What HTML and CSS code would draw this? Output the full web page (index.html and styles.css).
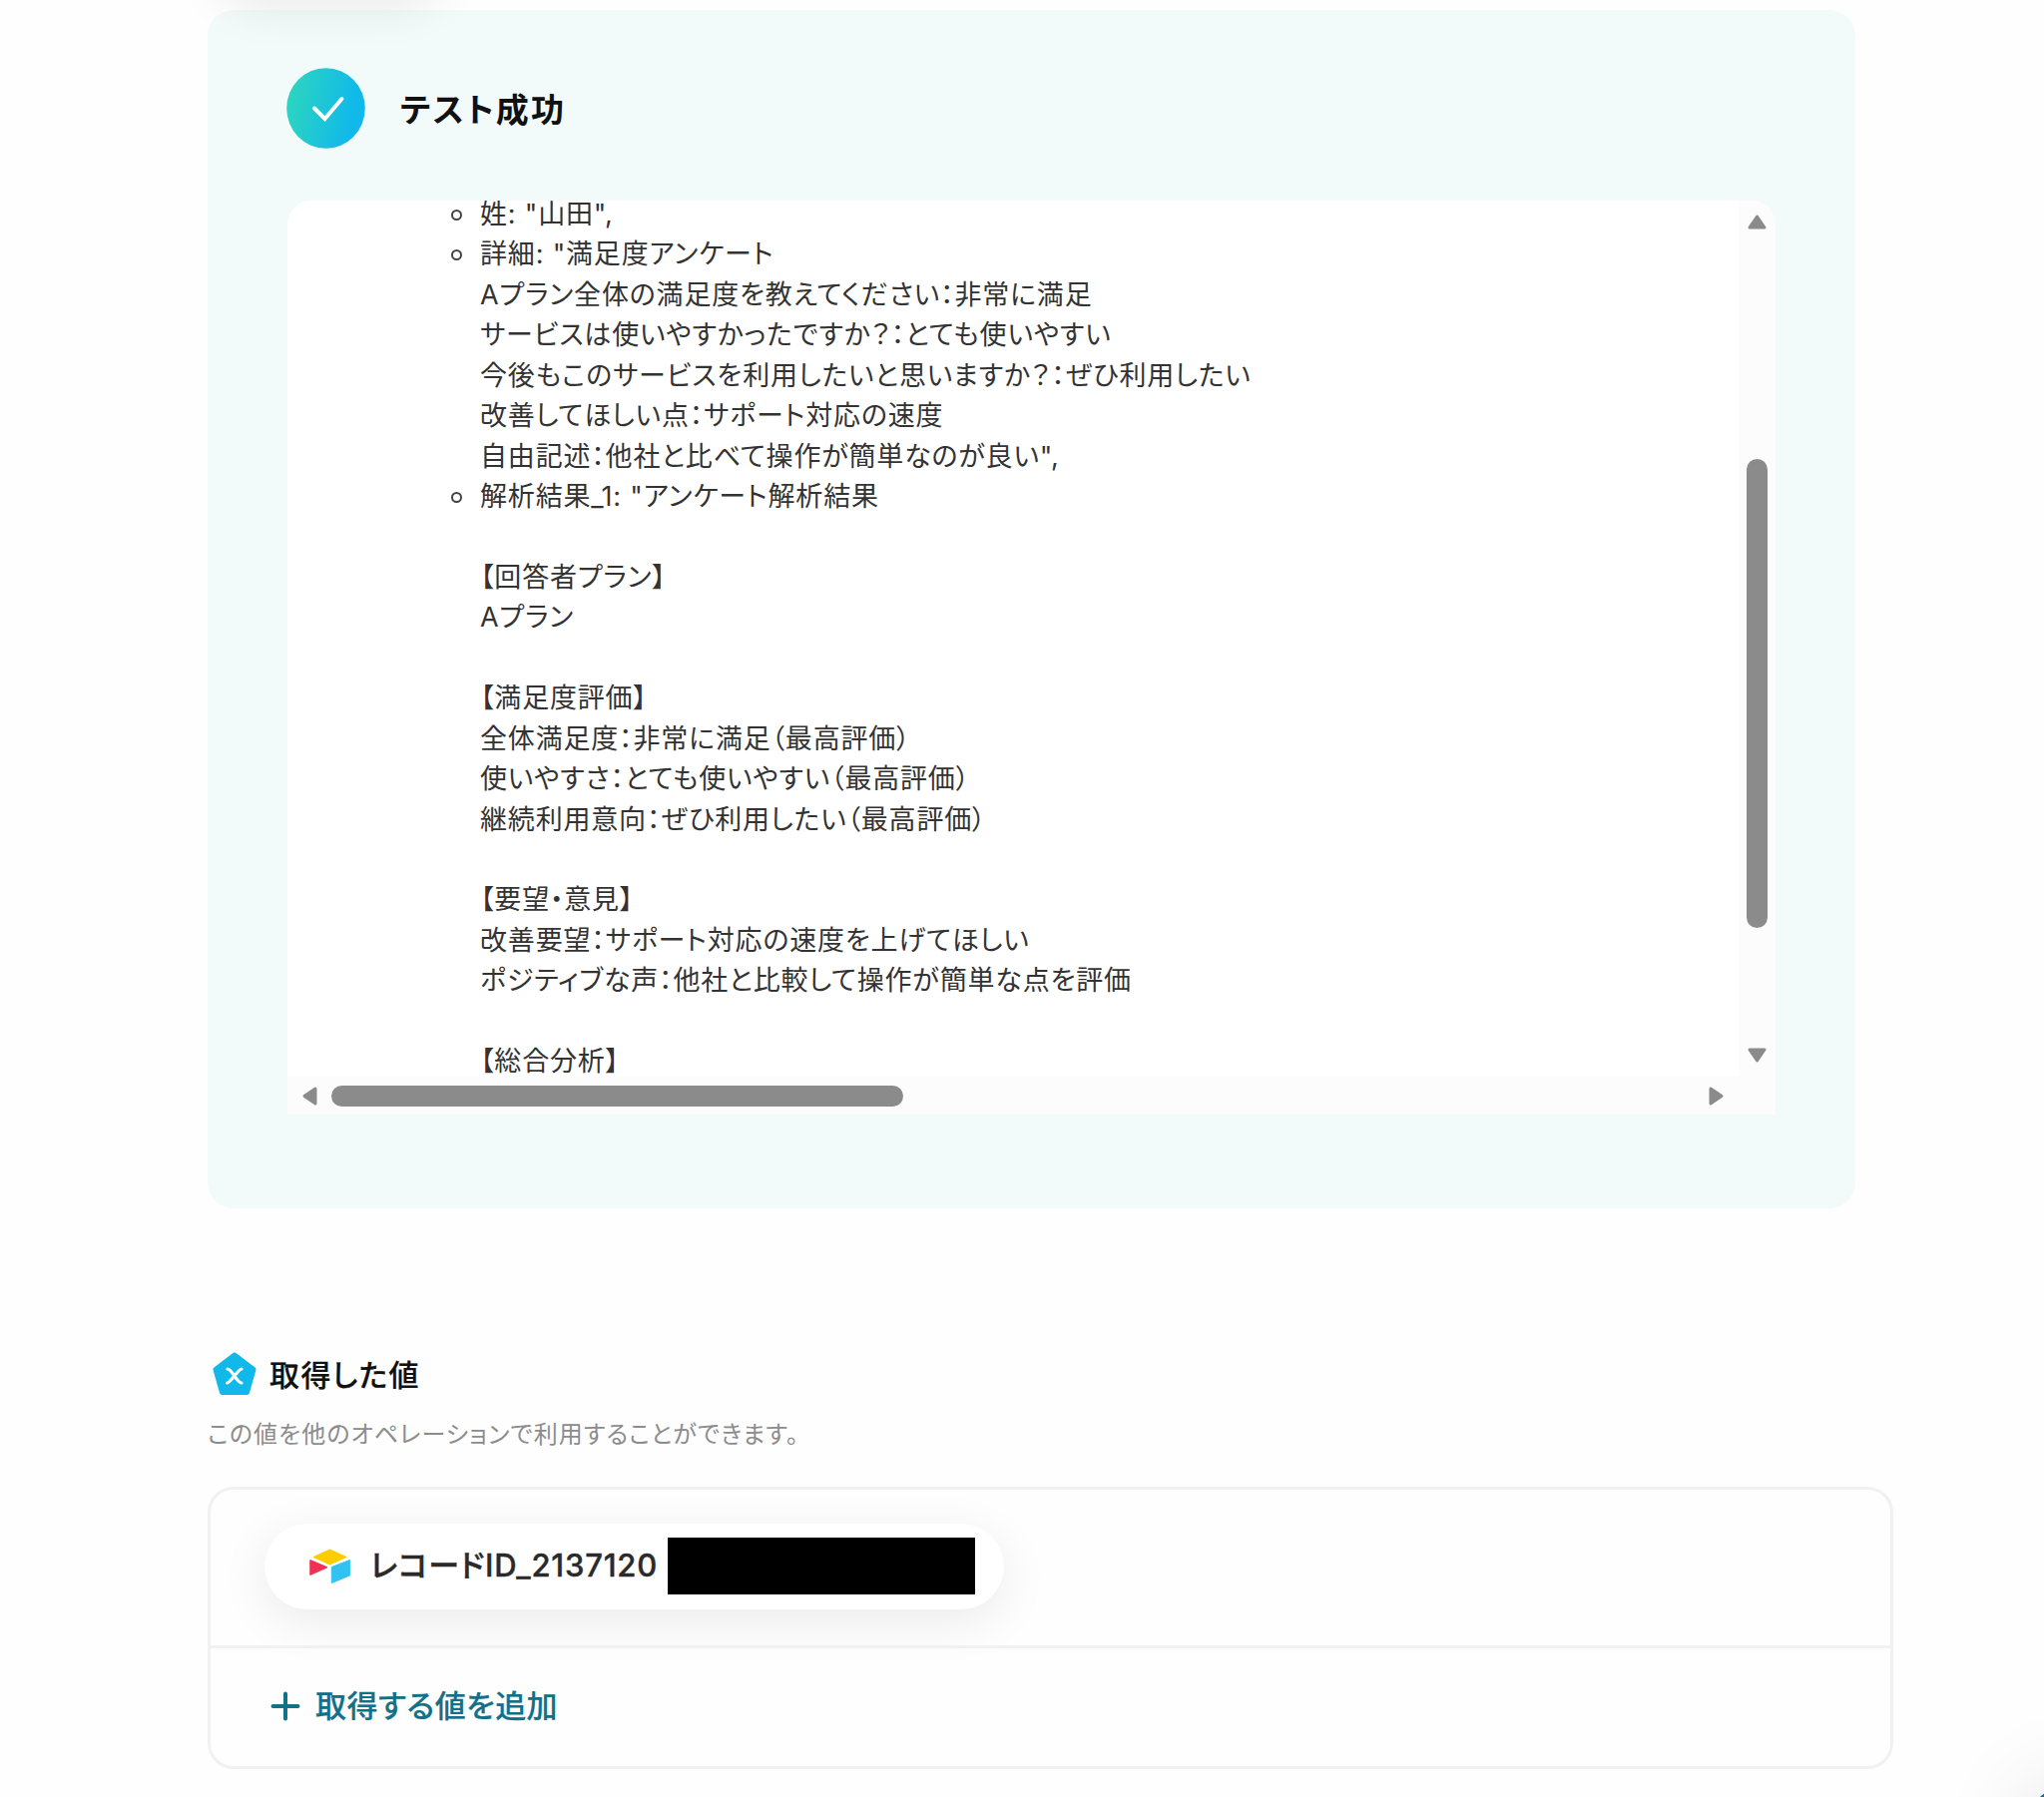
FILE: index.html
```html
<!DOCTYPE html>
<html lang="ja">
<head>
    <meta charset="UTF-8">
    <meta name="viewport" content="width=device-width, initial-scale=1.0">
    <title>テスト成功</title>
    <link rel="stylesheet" href="styles.css">
</head>
<body>
    <div class="prev-button"></div>

    <section class="result">
        <header class="result-header">
            <svg class="check" viewBox="0 0 79 81" preserveAspectRatio="none">
                <defs>
                    <linearGradient id="grad" x1="0" y1="0.4" x2="1" y2="0.6">
                        <stop offset="0" stop-color="#2dd5c0"/>
                        <stop offset="0.85" stop-color="#10b9ea"/>
                    </linearGradient>
                </defs>
                <ellipse cx="39.5" cy="40.5" rx="39.3" ry="40.3" fill="url(#grad)"/>
                <path d="M28 40.5 L38.5 51 L55.5 31" fill="none" stroke="#fff" stroke-width="4" stroke-linecap="round"/>
            </svg>
            <h2>テスト成功</h2>
        </header>

        <div class="viewer">
            <div class="viewer-body">
                <ul class="fields">
                    <li>姓: "山田",</li>
                    <li>詳細: "満足度アンケート
Aプラン全体の満足度を教えてください：非常に満足
サービスは使いやすかったですか？：とても使いやすい
今後もこのサービスを利用したいと思いますか？：ぜひ利用したい
改善してほしい点：サポート対応の速度
自由記述：他社と比べて操作が簡単なのが良い",</li>
                    <li>解析結果_1: "アンケート解析結果

【回答者プラン】
Aプラン

【満足度評価】
全体満足度：非常に満足（最高評価）
使いやすさ：とても使いやすい（最高評価）
継続利用意向：ぜひ利用したい（最高評価）

【要望・意見】
改善要望：サポート対応の速度を上げてほしい
ポジティブな声：他社と比較して操作が簡単な点を評価

【総合分析】</li>
                </ul>
            </div>
            <div class="bar bar-v">
                <svg width="19" height="15" viewBox="0 0 19 15"><path d="M9.5 2 L17 13 H2 Z"/></svg>
                <div class="thumb"></div>
                <svg width="19" height="15" viewBox="0 0 19 15"><path d="M9.5 13 L17 2 H2 Z"/></svg>
            </div>
            <div class="bar bar-h">
                <svg width="15" height="19" viewBox="0 0 15 19"><path d="M2 9.5 L13 2 V17 Z"/></svg>
                <div class="thumb"></div>
                <svg width="15" height="19" viewBox="0 0 15 19"><path d="M13 9.5 L2 2 V17 Z"/></svg>
            </div>
            <div class="corner"></div>
        </div>
    </section>

    <section class="values">
        <h3>
            <svg class="pentagon" width="46" height="46" viewBox="0 0 46 46">
                <path d="M23 4 L42 18.5 L35.5 41.5 H10.5 L4 18.5 Z" fill="#10b9ea" stroke="#10b9ea" stroke-width="5" stroke-linejoin="round"/>
                <path d="M16 18 C20.5 18 25 32 30 32 M30 18 C27 18 19 32 15.5 32" fill="none" stroke="#fff" stroke-width="3.2" stroke-linecap="round"/>
            </svg>
            <span>取得した値</span>
        </h3>
        <p class="note">この値を他のオペレーションで利用することができます。</p>

        <div class="panel">
            <div class="panel-row">
                <div class="chip">
                    <svg class="logo" width="41" height="36" viewBox="0 0 41 36">
                        <path d="M20.5 1 L37 8.5 L20.5 16 L4 8.5 Z" fill="#fc0" stroke="#fc0" stroke-linejoin="round"/>
                        <path d="M0.8 11.5 L18 18.8 L0.8 26.5 Z" fill="#ef3053" stroke="#ef3053" stroke-linejoin="round"/>
                        <path d="M22.3 18.5 L40.4 11.5 V27 L22.3 34.5 Z" fill="#31c2f2" stroke="#31c2f2" stroke-linejoin="round"/>
                    </svg>
                    <span class="chip-label">レコードID_2137120</span>
                    <span class="mask"></span>
                </div>
            </div>
            <div class="panel-row add">
                <svg width="30" height="30" viewBox="0 0 30 30"><path d="M15 2.5 V27.5 M2.5 15 H27.5" stroke="#137089" stroke-width="4" stroke-linecap="round"/></svg>
                <span>取得する値を追加</span>
            </div>
        </div>
    </section>

    <div class="chat-button"></div>
</body>
</html>
```
FILE: styles.css
```css
* {
    box-sizing: border-box;
}

html {
    overflow: hidden;
}

body {
    position: relative;
    width: 2048px;
    height: 1801px;
    margin: 0;
    padding: 10px 0 0 208px;
    overflow: hidden;
    background-color: #fefefe;
    color: #111;
    font-family: "Inter", "Noto Sans CJK JP", sans-serif;
    font-feature-settings: "palt";
}

h2, h3, p, ul {
    margin: 0;
    padding: 0;
}

/* Sombra del elemento que queda por encima */
.prev-button {
    position: absolute;
    left: 218px;
    top: -88px;
    width: 225px;
    height: 80px;
    border-radius: 40px;
    box-shadow: 0 10px 50px rgba(0, 0, 0, 0.1);
    z-index: 1;
}

/* Resultado */
.result {
    width: 1651px;
    height: 1201px;
    padding: 58px 80px 0;
    border-radius: 26px;
    background-color: #f2fbfa;
}

.result-header {
    display: flex;
    align-items: center;
    gap: 35px;
    height: 81px;
}

.check {
    width: 79px;
    height: 81px;
    margin-left: -1px;
}

h2 {
    padding-bottom: 2px;
    font-size: 33px;
    font-weight: 600;
    letter-spacing: 2.2px;
}

.viewer {
    display: grid;
    grid-template-columns: 1454px 37px;
    grid-template-rows: 878px 38px;
    width: 1491px;
    margin-top: 52px;
    border-radius: 24px 24px 0 0;
    overflow: hidden;
    background-color: #fff;
}

.viewer-body {
    overflow: hidden;
    padding-left: 193px;
}

.fields {
    margin-top: -6px;
    list-style: none;
    color: #333;
    font-size: 27px;
    line-height: 40.43px;
    letter-spacing: 0.82px;
}

.fields li {
    position: relative;
    white-space: pre;
}

.fields li::before {
    content: "";
    position: absolute;
    left: -29px;
    top: 15px;
    width: 11px;
    height: 11px;
    border: 2px solid #444;
    border-radius: 50%;
    box-sizing: border-box;
}

/* Barras de desplazamiento */
.bar {
    display: flex;
    align-items: center;
    background-color: #fcfcfc;
}

.bar path {
    fill: #8b8b8b;
    stroke: #8b8b8b;
    stroke-width: 3;
    stroke-linejoin: round;
}

.thumb {
    background-color: #8b8b8b;
    border-radius: 11px;
}

.bar-v {
    flex-direction: column;
    padding: 14px 0;
}

.bar-v .thumb {
    width: 21px;
    height: 470px;
    margin: 230px 0 auto;
}

.bar-h {
    padding: 0 15px;
}

.bar-h .thumb {
    width: 573px;
    height: 21px;
    margin: 0 auto 0 14px;
}

.corner {
    background-color: #fcfcfc;
}

/* Valores obtenidos */
.values {
    width: 1689px;
    margin-top: 142px;
}

h3 {
    display: flex;
    align-items: center;
    gap: 12px;
    height: 48px;
    padding-left: 4px;
    font-size: 30px;
    font-weight: 500;
    letter-spacing: 1.4px;
    -webkit-text-stroke: 0.2px currentColor;
}

h3 span {
    padding-bottom: 3px;
}

.note {
    margin-top: 19px;
    height: 36px;
    line-height: 36px;
    font-size: 24px;
    color: #8c8c8c;
    letter-spacing: 1.08px;
}

.panel {
    margin-top: 34px;
    height: 283px;
    border: 3px solid #f1f1f1;
    border-radius: 26px;
}

.panel-row {
    height: 156px;
    padding: 34px 0 0 54px;
}

.panel-row.add {
    display: flex;
    align-items: center;
    gap: 15px;
    height: 121px;
    padding: 0 0 3px 60px;
    border-top: 3px solid #f1f1f1;
    color: #137089;
    font-size: 31px;
    font-weight: 500;
    letter-spacing: 0.45px;
    -webkit-text-stroke: 0.2px currentColor;
}

.add span {
    padding-bottom: 5px;
}

.chip {
    display: flex;
    align-items: center;
    width: 741px;
    height: 86px;
    padding-left: 45px;
    border-radius: 43px;
    background-color: #fff;
    box-shadow: 0 12px 50px rgba(0, 0, 0, 0.08);
}

.chip-label {
    width: 298px;
    margin-left: 20px;
    padding-bottom: 7px;
    color: #2a2a2a;
    font-size: 31px;
    font-weight: 500;
    letter-spacing: 0.8px;
    white-space: nowrap;
    -webkit-text-stroke: 0.4px currentColor;
}

.mask {
    width: 308px;
    height: 57px;
    margin-bottom: 1px;
    background-color: #000;
}

/* Botón flotante de la esquina */
.chat-button {
    position: absolute;
    left: 2021px;
    top: 1785px;
    width: 132px;
    height: 132px;
    border-radius: 50%;
    background-color: #137089;
    box-shadow: 0 0 90px rgba(0, 0, 0, 0.1);
}
```
